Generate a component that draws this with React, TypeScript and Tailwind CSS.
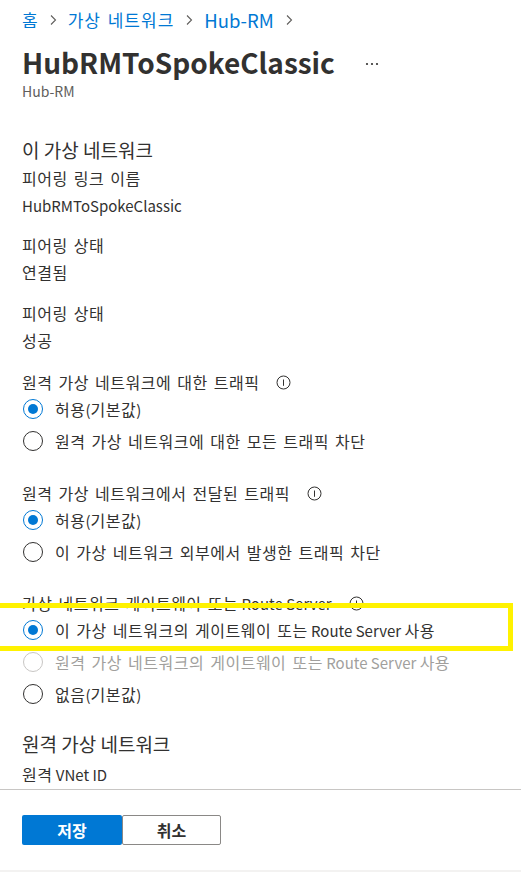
import React from 'react';

const font = { fontFamily: '"Noto Sans CJK KR", "Noto Sans", sans-serif' };

// Hangul runs get a little more room, like the portal's Malgun Gothic
const T = ({ t }: { t: string }) => (
  <>
    {t.split(/([\uac00-\ud7a3]+(?:\s+[\uac00-\ud7a3]+)*)/).map((p, i) =>
      i % 2 ? (
        <span key={i} className="text-[16px] tracking-[0.5px] [word-spacing:2px]">{p}</span>
      ) : p ? (
        <span key={i} className="text-[15px]">{p}</span>
      ) : null
    )}
  </>
);

const Chevron = () => (
  <svg width="8" height="12" viewBox="0 0 8 12" className="mx-[11px]">
    <path d="M2 1.5 L6.5 6 L2 10.5" fill="none" stroke="#605e5c" strokeWidth="1.1" />
  </svg>
);

const Info = () => (
  <svg width="15" height="15" viewBox="0 0 15 15" className="ml-[17px] shrink-0">
    <circle cx="7.5" cy="7.5" r="6.5" fill="none" stroke="#323130" strokeWidth="1" />
    <path d="M7.5 4.5 V10.8" stroke="#323130" strokeWidth="1" />
  </svg>
);

const Radio = ({ label, checked, disabled }: { label: string; checked?: boolean; disabled?: boolean }) => (
  <div className="flex items-center h-[32px]">
    <div
      className={`w-5 h-5 ml-[1px] rounded-full border flex items-center justify-center shrink-0 ${
        checked ? 'border-[#0078d4]' : disabled ? 'border-[#c8c6c4]' : 'border-[#323130]'
      }`}
    >
      {checked && <div className="w-[10px] h-[10px] rounded-full bg-[#0078d4]" />}
    </div>
    <span className={`ml-[12px] ${disabled ? 'text-[#a19f9d]' : 'text-[#323130]'}`}>
      <T t={label} />
    </span>
  </div>
);

const Field = ({ label, value, className }: { label: string; value: string; className?: string }) => (
  <div className={className}>
    <div className="leading-[27px]"><T t={label} /></div>
    <div className="leading-[27px]"><T t={value} /></div>
  </div>
);

const GroupLabel = ({ text, className }: { text: string; className?: string }) => (
  <div className={`flex items-center h-[22px] ${className ?? ''}`}>
    <span><T t={text} /></span>
    <Info />
  </div>
);

export default function App() {
  return (
    <div style={font} className="w-[521px] min-h-[872px] bg-white flex flex-col text-[#323130] overflow-hidden">
      <div className="pl-[22px] pr-4">
        {/* breadcrumb */}
        <div className="flex items-center pt-[8px] h-[32px] text-[#0078d4] leading-[24px]">
          <span className="text-[17px]">홈</span>
          <Chevron />
          <span className="text-[17px] tracking-[1px] [word-spacing:2px]">가상 네트워크</span>
          <Chevron />
          <span className="text-[18.5px]">Hub-RM</span>
          <Chevron />
        </div>

        {/* title */}
        <div className="flex items-center mt-[12px] h-[36px]">
          <h1 className="text-[28px] font-semibold leading-[36px] text-[#323130]">HubRMToSpokeClassic</h1>
          <svg width="14" height="4" viewBox="0 0 14 4" className="ml-[30px] mt-[4px]">
            <circle cx="2" cy="2" r="1.1" fill="#323130" />
            <circle cx="7" cy="2" r="1.1" fill="#323130" />
            <circle cx="12" cy="2" r="1.1" fill="#323130" />
          </svg>
        </div>
        <div className="mt-[2px] text-[14px] leading-[18px] text-[#605e5c]">Hub-RM</div>

        {/* this vnet */}
        <div className="mt-[38px] text-[19px] leading-[24px]">이 가상 네트워크</div>
        <Field className="mt-[3px]" label="피어링 링크 이름" value="HubRMToSpokeClassic" />
        <Field className="mt-[13px]" label="피어링 상태" value="연결됨" />
        <Field className="mt-[14px]" label="피어링 상태" value="성공" />

        {/* traffic to remote */}
        <GroupLabel className="mt-[17px]" text="원격 가상 네트워크에 대한 트래픽" />
        <Radio label="허용(기본값)" checked />
        <Radio label="원격 가상 네트워크에 대한 모든 트래픽 차단" />

        {/* forwarded traffic */}
        <GroupLabel className="mt-[25px]" text="원격 가상 네트워크에서 전달된 트래픽" />
        <Radio label="허용(기본값)" checked />
        <Radio label="이 가상 네트워크 외부에서 발생한 트래픽 차단" />

        {/* gateway */}
        <GroupLabel className="mt-[24px]" text="가상 네트워크 게이트웨이 또는 Route Server" />
        <div className="relative">
          <Radio label="이 가상 네트워크의 게이트웨이 또는 Route Server 사용" checked />
          <div className="absolute top-[-11px] left-[-28px] w-[519px] h-[48px] border-[5px] border-[#fff200] pointer-events-none" />
        </div>
        <Radio label="원격 가상 네트워크의 게이트웨이 또는 Route Server 사용" disabled />
        <Radio label="없음(기본값)" />

        {/* remote vnet */}
        <div className="mt-[22px] text-[19px] leading-[24px]">원격 가상 네트워크</div>
        <div className="mt-[6px] leading-[24px]"><T t="원격 VNet ID" /></div>
      </div>

      <div className="mt-[2px] border-t border-[#c8c6c4]" />

      <div className="flex pl-[22px] pt-[25px] pb-[25px]">
        <button className="w-[100px] h-[30px] rounded-[2px] bg-[#0078d4] text-white text-[16px] font-semibold">저장</button>
        <button className="w-[99px] h-[30px] rounded-[2px] bg-white border border-[#8a8886] text-[#323130] text-[16px] font-semibold">취소</button>
      </div>

      <div className="flex-1 bg-[#f3f2f1]" />
    </div>
  );
}
